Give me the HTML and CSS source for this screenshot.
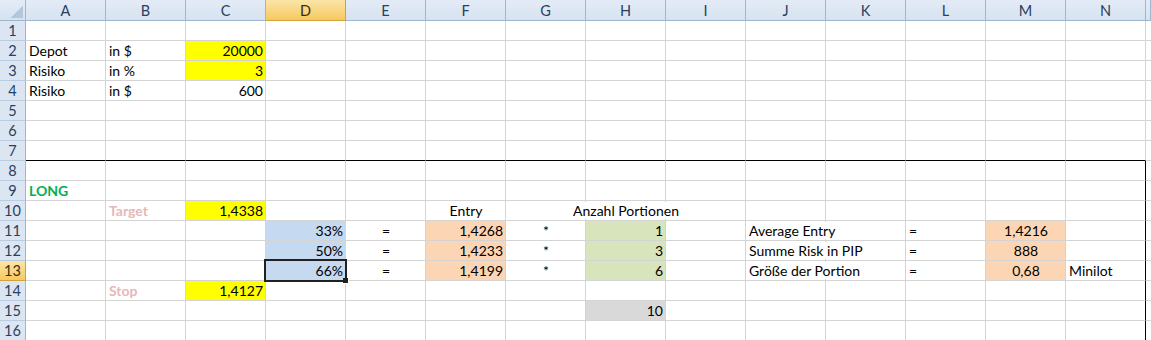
FILE: index.html
```html
<!DOCTYPE html>
<html lang="de">
<head>
    <meta charset="UTF-8">
    <title>Positionsgröße</title>
    <link rel="stylesheet" href="styles.css">
</head>
<body>
    <div class="sheet">
        <div class="row hdr">
            <div class="corner"><span class="tri"></span></div>
            <div class="ch">A</div><div class="ch">B</div><div class="ch">C</div><div class="ch active">D</div><div class="ch">E</div><div class="ch">F</div><div class="ch">G</div>
            <div class="ch">H</div><div class="ch">I</div><div class="ch">J</div><div class="ch">K</div><div class="ch">L</div><div class="ch">M</div><div class="ch">N</div><div class="ch rest"></div>
        </div>
        <div class="row">
            <div class="rh">1</div>
            <div class="c"></div><div class="c"></div><div class="c"></div><div class="c"></div><div class="c"></div><div class="c"></div><div class="c"></div>
            <div class="c"></div><div class="c"></div><div class="c"></div><div class="c"></div><div class="c"></div><div class="c"></div><div class="c"></div><div class="c rest"></div>
        </div>
        <div class="row">
            <div class="rh">2</div>
            <div class="c">Depot</div><div class="c">in $</div><div class="c r yellow">20000</div><div class="c"></div><div class="c"></div><div class="c"></div><div class="c"></div>
            <div class="c"></div><div class="c"></div><div class="c"></div><div class="c"></div><div class="c"></div><div class="c"></div><div class="c"></div><div class="c rest"></div>
        </div>
        <div class="row">
            <div class="rh">3</div>
            <div class="c">Risiko</div><div class="c">in %</div><div class="c r yellow">3</div><div class="c"></div><div class="c"></div><div class="c"></div><div class="c"></div>
            <div class="c"></div><div class="c"></div><div class="c"></div><div class="c"></div><div class="c"></div><div class="c"></div><div class="c"></div><div class="c rest"></div>
        </div>
        <div class="row">
            <div class="rh">4</div>
            <div class="c">Risiko</div><div class="c">in $</div><div class="c r">600</div><div class="c"></div><div class="c"></div><div class="c"></div><div class="c"></div>
            <div class="c"></div><div class="c"></div><div class="c"></div><div class="c"></div><div class="c"></div><div class="c"></div><div class="c"></div><div class="c rest"></div>
        </div>
        <div class="row">
            <div class="rh">5</div>
            <div class="c"></div><div class="c"></div><div class="c"></div><div class="c"></div><div class="c"></div><div class="c"></div><div class="c"></div>
            <div class="c"></div><div class="c"></div><div class="c"></div><div class="c"></div><div class="c"></div><div class="c"></div><div class="c"></div><div class="c rest"></div>
        </div>
        <div class="row">
            <div class="rh">6</div>
            <div class="c"></div><div class="c"></div><div class="c"></div><div class="c"></div><div class="c"></div><div class="c"></div><div class="c"></div>
            <div class="c"></div><div class="c"></div><div class="c"></div><div class="c"></div><div class="c"></div><div class="c"></div><div class="c"></div><div class="c rest"></div>
        </div>
        <div class="row box-top">
            <div class="rh">7</div>
            <div class="c"></div><div class="c"></div><div class="c"></div><div class="c"></div><div class="c"></div><div class="c"></div><div class="c"></div>
            <div class="c"></div><div class="c"></div><div class="c"></div><div class="c"></div><div class="c"></div><div class="c"></div><div class="c"></div><div class="c rest"></div>
        </div>
        <div class="row">
            <div class="rh">8</div>
            <div class="c"></div><div class="c"></div><div class="c"></div><div class="c"></div><div class="c"></div><div class="c"></div><div class="c"></div>
            <div class="c"></div><div class="c"></div><div class="c"></div><div class="c"></div><div class="c"></div><div class="c"></div><div class="c edge"></div><div class="c rest"></div>
        </div>
        <div class="row">
            <div class="rh">9</div>
            <div class="c long">LONG</div><div class="c"></div><div class="c"></div><div class="c"></div><div class="c"></div><div class="c"></div><div class="c"></div>
            <div class="c"></div><div class="c"></div><div class="c"></div><div class="c"></div><div class="c"></div><div class="c"></div><div class="c edge"></div><div class="c rest"></div>
        </div>
        <div class="row">
            <div class="rh">10</div>
            <div class="c"></div><div class="c pink">Target</div><div class="c r yellow">1,4338</div><div class="c"></div><div class="c"></div><div class="c ctr">Entry</div><div class="c"></div>
            <div class="c ctr"><span class="spill">Anzahl Portionen</span></div><div class="c"></div><div class="c"></div><div class="c"></div><div class="c"></div><div class="c"></div><div class="c edge"></div><div class="c rest"></div>
        </div>
        <div class="row">
            <div class="rh">11</div>
            <div class="c"></div><div class="c"></div><div class="c"></div><div class="c r blue">33%</div><div class="c ctr">=</div><div class="c r peach">1,4268</div><div class="c ctr">*</div>
            <div class="c r green">1</div><div class="c"></div><div class="c"><span class="spill">Average Entry</span></div><div class="c"></div><div class="c">=</div><div class="c ctr peach">1,4216</div><div class="c edge"></div><div class="c rest"></div>
        </div>
        <div class="row">
            <div class="rh">12</div>
            <div class="c"></div><div class="c"></div><div class="c"></div><div class="c r blue">50%</div><div class="c ctr">=</div><div class="c r peach">1,4233</div><div class="c ctr">*</div>
            <div class="c r green">3</div><div class="c"></div><div class="c"><span class="spill">Summe Risk in PIP</span></div><div class="c"></div><div class="c">=</div><div class="c ctr peach">888</div><div class="c edge"></div><div class="c rest"></div>
        </div>
        <div class="row">
            <div class="rh active">13</div>
            <div class="c"></div><div class="c"></div><div class="c"></div><div class="c r blue sel">66%<span class="handle"></span></div><div class="c ctr">=</div><div class="c r peach">1,4199</div><div class="c ctr">*</div>
            <div class="c r green">6</div><div class="c"></div><div class="c"><span class="spill">Größe der Portion</span></div><div class="c"></div><div class="c">=</div><div class="c ctr peach">0,68</div><div class="c edge">Minilot</div><div class="c rest"></div>
        </div>
        <div class="row">
            <div class="rh">14</div>
            <div class="c"></div><div class="c pink">Stop</div><div class="c r yellow">1,4127</div><div class="c"></div><div class="c"></div><div class="c"></div><div class="c"></div>
            <div class="c"></div><div class="c"></div><div class="c"></div><div class="c"></div><div class="c"></div><div class="c"></div><div class="c edge"></div><div class="c rest"></div>
        </div>
        <div class="row">
            <div class="rh">15</div>
            <div class="c"></div><div class="c"></div><div class="c"></div><div class="c"></div><div class="c"></div><div class="c"></div><div class="c"></div>
            <div class="c r grey">10</div><div class="c"></div><div class="c"></div><div class="c"></div><div class="c"></div><div class="c"></div><div class="c edge"></div><div class="c rest"></div>
        </div>
        <div class="row">
            <div class="rh">16</div>
            <div class="c"></div><div class="c"></div><div class="c"></div><div class="c"></div><div class="c"></div><div class="c"></div><div class="c"></div>
            <div class="c"></div><div class="c"></div><div class="c"></div><div class="c"></div><div class="c"></div><div class="c"></div><div class="c edge"></div><div class="c rest"></div>
        </div>
    </div>
</body>
</html>
```

FILE: styles.css
```css
body {
    margin: 0;
    background-color: white;
    font-family: Lato, "Liberation Sans", sans-serif;
    font-size: 14px;
    color: black;
}

.sheet {
    width: 1151px;
    height: 340px;
    overflow: hidden;
}

.row {
    display: flex;
    height: 20px;
}

.row.hdr {
    height: 21px;
}

/* header cells */
.corner,
.ch,
.rh {
    box-sizing: border-box;
    display: flex;
    align-items: center;
    justify-content: center;
    min-width: 0;
    font-size: 14.5px;
    color: #27415f;
    border-right: 1px solid #9eb6ce;
    border-bottom: 1px solid #9eb6ce;
}

.corner {
    flex: 0 0 26px;
    align-items: flex-end;
    justify-content: flex-end;
    padding: 0 2px 2px 0;
    background: linear-gradient(#e4ecf7, #d6e2f1);
}

.tri {
    width: 12px;
    height: 12px;
    background: linear-gradient(to bottom right, transparent 50%, #b4c6dc 50%);
}

.ch {
    flex: 0 0 80px;
    background: linear-gradient(#e3ebf6, #d7e3f1);
}

.rh {
    flex: 0 0 26px;
    background: #dce6f3;
    border-bottom-color: #b9cbe0;
}

.ch.active,
.rh.active {
    background: linear-gradient(#fbe5a8, #f6c95f);
    color: #3b2c12;
    border-bottom-color: #d4a040;
    border-right-color: #c8a154;
}

.ch.rest {
    flex: 1 1 auto;
}

/* grid cells */
.c {
    flex: 0 0 80px;
    min-width: 0;
    box-sizing: border-box;
    display: flex;
    align-items: center;
    padding: 0 2px 0 3px;
    white-space: nowrap;
    border-right: 1px solid #d4d4d4;
    border-bottom: 1px solid #d4d4d4;
}

.c.rest {
    flex: 1 1 auto;
    border-right: none;
}

.r {
    justify-content: flex-end;
}

.ctr {
    justify-content: center;
}

.spill {
    background-color: white;
}

.box-top .c {
    border-bottom-color: black;
}

.box-top .c.rest {
    border-bottom-color: #d4d4d4;
}

.c.edge {
    border-right-color: black;
}

.yellow { background-color: #ffff00; }
.blue { background-color: #c5d9f1; }
.peach { background-color: #fcd5b4; }
.green { background-color: #d8e4bc; }
.grey { background-color: #d9d9d9; }

.long {
    color: #00b050;
    font-weight: bold;
}

.pink {
    color: #e6b8b7;
    font-weight: bold;
}

.sel {
    position: relative;
    z-index: 1;
}

.sel::before {
    content: "";
    position: absolute;
    left: -2px;
    top: -2px;
    right: -2px;
    bottom: -2px;
    border: 2px solid #231f1c;
}

.handle {
    position: absolute;
    right: -4px;
    bottom: -4px;
    width: 5px;
    height: 5px;
    background-color: #231f1c;
    border: 1px solid white;
    border-left: none;
    border-top: none;
}
```
